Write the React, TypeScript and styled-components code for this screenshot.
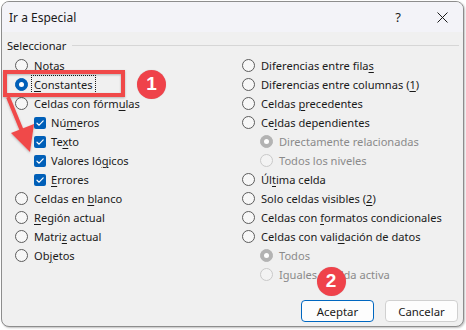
import React from "react";
import styled, { createGlobalStyle } from "styled-components";

const Global = createGlobalStyle`
  html, body { margin: 0; padding: 0; background: #ffffff; }
  body { width: 466px; height: 330px; overflow: hidden; position: relative; }
  * { box-sizing: border-box; }
`;

const Page = styled.div`
  position: relative;
  width: 466px;
  height: 330px;
  padding: 1px 0 0 1px;
  font-family: "Noto Sans", "Segoe UI", sans-serif;
  font-size: 11.1px;
  color: #1a1a1a;
`;

const Dialog = styled.div`
  width: 463px;
  height: 326px;
  border: 1px solid #8d8d8d;
  border-radius: 8px;
  overflow: hidden;
  background: #f0f0f0;
  display: flex;
  flex-direction: column;
  box-shadow: 1px 1px 2px rgba(0, 0, 0, 0.25);
`;

const TitleBar = styled.div`
  height: 30px;
  flex: none;
  background: #f3f3f8;
  display: flex;
  align-items: center;
  padding-left: 7px;
  font-size: 12px;
`;

const Title = styled.div`
  flex: 1;
`;

const TitleButton = styled.div<{ $w: number }>`
  width: ${(p) => p.$w}px;
  height: 30px;
  display: flex;
  align-items: center;
  justify-content: center;
  font-size: 13px;
  color: #1a1a1a;
`;

const Body = styled.div`
  flex: 1;
  display: flex;
  flex-direction: column;
  padding: 5px 5px 0 13px;
`;

const GroupHeader = styled.div`
  height: 16px;
  display: flex;
  align-items: center;
  gap: 6px;
  margin-left: -8px;
  margin-right: -1px;
`;

const GroupLine = styled.div`
  flex: 1;
  height: 1px;
  background: #d6d6d6;
`;

const Columns = styled.div`
  margin-top: 3px;
  display: grid;
  grid-template-columns: 227px 1fr;
`;

const Column = styled.div`
  display: flex;
  flex-direction: column;
`;

const Option = styled.div<{ $indent?: number; $disabled?: boolean }>`
  height: 19px;
  display: flex;
  align-items: center;
  gap: 6px;
  padding-left: ${(p) => p.$indent ?? 0}px;
  color: ${(p) => (p.$disabled ? "#8a8a8a" : "#1a1a1a")};
  white-space: nowrap;
`;

const Label = styled.span<{ $focus?: boolean }>`
  u { text-underline-offset: 2px; text-decoration-thickness: 1px; }
  ${(p) =>
    p.$focus
      ? `outline: 1px dotted #1a1a1a; outline-offset: 1px; padding: 0 1px; margin-left: -1px;`
      : ""}
`;

const Radio = styled.span<{ $checked?: boolean; $disabled?: boolean }>`
  flex: none;
  position: relative;
  width: 13px;
  height: 13px;
  border-radius: 50%;
  border: 1px solid
    ${(p) =>
      p.$checked
        ? p.$disabled
          ? "#b3b3b3"
          : "#005fb8"
        : p.$disabled
        ? "#c9c9c9"
        : "#5c5c5c"};
  background: ${(p) =>
    p.$checked ? (p.$disabled ? "#b3b3b3" : "#005fb8") : p.$disabled ? "#f3f3f3" : "#f7f7f7"};
  &::after {
    content: "";
    display: ${(p) => (p.$checked ? "block" : "none")};
    position: absolute;
    left: 3px;
    top: 3px;
    width: 5px;
    height: 5px;
    border-radius: 50%;
    background: #ffffff;
  }
`;

const Check = styled.span`
  flex: none;
  width: 12px;
  height: 12px;
  border-radius: 2px;
  background: #005fb8;
  display: flex;
  align-items: center;
  justify-content: center;
  margin-right: -1px;
`;

const Buttons = styled.div`
  margin-top: 16px;
  display: flex;
  justify-content: flex-end;
  gap: 11px;
`;

const Button = styled.div<{ $primary?: boolean }>`
  width: 73px;
  height: 22px;
  border-radius: 4px;
  border: 1px solid ${(p) => (p.$primary ? "#0067c0" : "#d0d0d0")};
  background: #fdfdfd;
  display: flex;
  align-items: center;
  justify-content: center;
  font-size: 11.4px;
`;

const Overlay = styled.svg`
  position: absolute;
  left: 0;
  top: 0;
  pointer-events: none;
`;

const Badge = styled.div<{ $x: number; $y: number }>`
  position: absolute;
  left: ${(p) => p.$x - 14.5}px;
  top: ${(p) => p.$y - 14.5}px;
  width: 29px;
  height: 29px;
  border-radius: 50%;
  background: #ef424a;
  color: #ffffff;
  font-family: "Liberation Sans", Arial, sans-serif;
  font-weight: 700;
  font-size: 19px;
  display: flex;
  align-items: center;
  justify-content: center;
  box-shadow: 0 0 1px rgba(0, 0, 0, 0.2);
`;

const CheckMark = () => (
  <svg width="10" height="10" viewBox="0 0 10 10">
    <path d="M2 5.2 L4.1 7.2 L8.2 2.9" fill="none" stroke="#fff" strokeWidth="1.2" strokeLinecap="round" strokeLinejoin="round" />
  </svg>
);

export default function App() {
  return (
    <Page>
      <Global />
      <Dialog>
        <TitleBar>
          <Title>Ir a Especial</Title>
          <TitleButton $w={46}>?</TitleButton>
          <TitleButton $w={42}>
            <svg width="11" height="11" viewBox="0 0 11 11">
              <path d="M0.5 0.5 L10.5 10.5 M10.5 0.5 L0.5 10.5" stroke="#1a1a1a" strokeWidth="1" />
            </svg>
          </TitleButton>
        </TitleBar>
        <Body>
          <GroupHeader>
            <span>Seleccionar</span>
            <GroupLine />
          </GroupHeader>
          <Columns>
            <Column>
              <Option><Radio /><Label>Notas</Label></Option>
              <Option><Radio $checked /><Label $focus><u>C</u>onstantes</Label></Option>
              <Option><Radio /><Label>Celdas con fórm<u>u</u>las</Label></Option>
              <Option $indent={19}><Check><CheckMark /></Check><Label>Nú<u>m</u>eros</Label></Option>
              <Option $indent={19}><Check><CheckMark /></Check><Label>Te<u>x</u>to</Label></Option>
              <Option $indent={19}><Check><CheckMark /></Check><Label>Valores ló<u>g</u>icos</Label></Option>
              <Option $indent={19}><Check><CheckMark /></Check><Label><u>E</u>rrores</Label></Option>
              <Option><Radio /><Label>Celdas en <u>b</u>lanco</Label></Option>
              <Option><Radio /><Label><u>R</u>egión actual</Label></Option>
              <Option><Radio /><Label>Matri<u>z</u> actual</Label></Option>
              <Option><Radio /><Label>Ob<u>j</u>etos</Label></Option>
            </Column>
            <Column>
              <Option><Radio /><Label>Diferencias entre fila<u>s</u></Label></Option>
              <Option><Radio /><Label>Diferencias entre columnas (<u>1</u>)</Label></Option>
              <Option><Radio /><Label>Celdas <u>p</u>recedentes</Label></Option>
              <Option><Radio /><Label>Ce<u>l</u>das dependientes</Label></Option>
              <Option $indent={18} $disabled><Radio $checked $disabled /><Label>Directamente relacionadas</Label></Option>
              <Option $indent={18} $disabled><Radio $disabled /><Label>Todos los niveles</Label></Option>
              <Option><Radio /><Label>Úl<u>t</u>ima celda</Label></Option>
              <Option><Radio /><Label>Solo celdas visibles (<u>2</u>)</Label></Option>
              <Option><Radio /><Label>Celdas con <u>f</u>ormatos condicionales</Label></Option>
              <Option><Radio /><Label>Celdas con vali<u>d</u>ación de datos</Label></Option>
              <Option $indent={18} $disabled><Radio $checked $disabled /><Label>Todos</Label></Option>
              <Option $indent={18} $disabled><Radio $disabled /><Label>Iguales a celda activa</Label></Option>
            </Column>
          </Columns>
          <Buttons>
            <Button $primary>Aceptar</Button>
            <Button>Cancelar</Button>
          </Buttons>
        </Body>
      </Dialog>
      <Overlay width="466" height="330" viewBox="0 0 466 330">
        <defs>
          <filter id="sh" x="-10%" y="-10%" width="120%" height="130%">
            <feDropShadow dx="0" dy="1" stdDeviation="1" floodColor="#000" floodOpacity="0.25" />
          </filter>
        </defs>
        <g filter="url(#sh)">
          <rect x="5" y="72" width="118" height="23" fill="none" stroke="#f04a4a" strokeWidth="4" />
          <path d="M8 97 L22 131" stroke="#f04a4a" strokeWidth="4" fill="none" />
          <path d="M11 133 L34 124 L30 152 Z" fill="#f04a4a" />
        </g>
      </Overlay>
      <Badge $x={151.5} $y={84}>1</Badge>
      <Badge $x={331} $y={281}>2</Badge>
    </Page>
  );
}
